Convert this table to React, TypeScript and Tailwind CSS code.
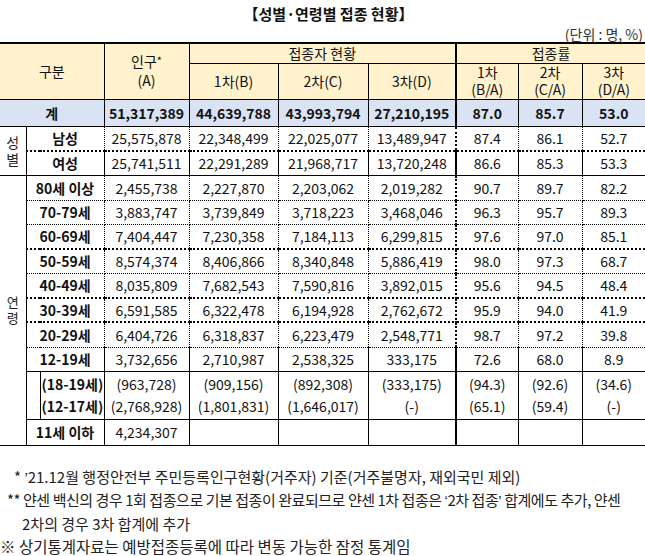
import React from "react";

type Row = {
  label: string;
  values: string[];
  sep: "dot" | "dot2" | "solid";
};

const genderRows: Row[] = [
  { label: "남성", values: ["25,575,878", "22,348,499", "22,025,077", "13,489,947", "87.4", "86.1", "52.7"], sep: "dot2" },
  { label: "여성", values: ["25,741,511", "22,291,289", "21,968,717", "13,720,248", "86.6", "85.3", "53.3"], sep: "solid" },
];

const ageRows: Row[] = [
  { label: "80세 이상", values: ["2,455,738", "2,227,870", "2,203,062", "2,019,282", "90.7", "89.7", "82.2"], sep: "dot" },
  { label: "70-79세", values: ["3,883,747", "3,739,849", "3,718,223", "3,468,046", "96.3", "95.7", "89.3"], sep: "dot" },
  { label: "60-69세", values: ["7,404,447", "7,230,358", "7,184,113", "6,299,815", "97.6", "97.0", "85.1"], sep: "dot2" },
  { label: "50-59세", values: ["8,574,374", "8,406,866", "8,340,848", "5,886,419", "98.0", "97.3", "68.7"], sep: "dot" },
  { label: "40-49세", values: ["8,035,809", "7,682,543", "7,590,816", "3,892,015", "95.6", "94.5", "48.4"], sep: "dot2" },
  { label: "30-39세", values: ["6,591,585", "6,322,478", "6,194,928", "2,762,672", "95.9", "94.0", "41.9"], sep: "dot2" },
  { label: "20-29세", values: ["6,404,726", "6,318,837", "6,223,479", "2,548,771", "98.7", "97.2", "39.8"], sep: "dot" },
  { label: "12-19세", values: ["3,732,656", "2,710,987", "2,538,325", "333,175", "72.6", "68.0", "8.9"], sep: "solid" },
];

const sub18 = ["(963,728)", "(909,156)", "(892,308)", "(333,175)", "(94.3)", "(92.6)", "(34.6)"];
const sub12 = ["(2,768,928)", "(1,801,831)", "(1,646,017)", "(-)", "(65.1)", "(59.4)", "(-)"];

const sepClass = {
  dot: "border-b border-dotted",
  dot2: "border-b-2 border-dotted",
  solid: "border-b border-solid",
};

// 세로 구분선: 3차(D) 뒤는 굵은 선, 마지막 열은 선 없음
function colBorder(i: number) {
  if (i === 3) return "border-r-2";
  if (i === 6) return "";
  return "border-r";
}

function DataRow({ row, height, first }: { row: Row; height: number; first?: React.ReactNode }) {
  const sep = sepClass[row.sep];
  return (
    <tr style={{ height }}>
      {first}
      <td colSpan={2} className={`${sep} border-r border-black text-center font-bold`}>
        {row.label}
      </td>
      {row.values.map((v, i) => (
        <td key={i} className={`${sep} ${colBorder(i)} border-black text-center`}>
          {v}
        </td>
      ))}
    </tr>
  );
}

// 따옴표는 라틴 글꼴로 (CJK 전각 방지)
function Q({ children }: { children: React.ReactNode }) {
  return <span className="font-['Liberation_Sans',sans-serif]">{children}</span>;
}

export default function App() {
  const heights = [25, 24, 25, 24, 25, 24, 25, 24, 25, 24];

  return (
    <div className="w-[645px] h-[556px] bg-white text-[#111] font-['Noto_Sans_CJK_KR','Malgun_Gothic',sans-serif] overflow-hidden">
      <div className="h-[26px] pt-[3px] pl-[12px] leading-[22px] text-center text-[15px] font-bold">
        【성별·연령별 접종 현황】
      </div>
      <div className="h-[16px] leading-[16px] text-right text-[14px] pr-[2px] text-[#333]">
        (단위 : 명, %)
      </div>

      <table className="table-fixed border-collapse w-[645px] text-[14px] leading-[18px]">
        <colgroup>
          <col className="w-[26px]" />
          <col className="w-[14px]" />
          <col className="w-[64px]" />
          <col className="w-[85px]" />
          <col className="w-[89px]" />
          <col className="w-[90px]" />
          <col className="w-[88px]" />
          <col className="w-[62px]" />
          <col className="w-[64px]" />
          <col className="w-[63px]" />
        </colgroup>
        <thead className="bg-[#fff2cc] font-normal">
          <tr className="h-[20px]">
            <th colSpan={3} rowSpan={2} className="border-t-2 border-b border-r border-black font-normal">
              구분
            </th>
            <th rowSpan={2} className="border-t-2 border-b border-r border-black font-normal">
              <div className="leading-[19px]">
                인구<sup className="text-[11px] relative -top-[2px]">*</sup>
              </div>
              <div className="leading-[19px]">(A)</div>
            </th>
            <th colSpan={3} className="border-t-2 border-b border-r-2 border-black font-normal">
              접종자 현황
            </th>
            <th colSpan={3} className="border-t-2 border-b border-black font-normal">
              접종률
            </th>
          </tr>
          <tr className="h-[36px]">
            <th className="border-b border-r border-black font-normal">1차(B)</th>
            <th className="border-b border-r border-black font-normal">2차(C)</th>
            <th className="border-b border-r-2 border-black font-normal">3차(D)</th>
            <th className="border-b border-r border-black font-normal leading-[17px]">
              1차
              <br />
              (B/A)
            </th>
            <th className="border-b border-r border-black font-normal leading-[17px]">
              2차
              <br />
              (C/A)
            </th>
            <th className="border-b border-black font-normal leading-[17px]">
              3차
              <br />
              (D/A)
            </th>
          </tr>
        </thead>
        <tbody>
          {/* 계 */}
          <tr className="h-[27px] bg-[#dae3f3] font-bold">
            <td colSpan={3} className="border-b border-r border-black text-center">
              계
            </td>
            {["51,317,389", "44,639,788", "43,993,794", "27,210,195", "87.0", "85.7", "53.0"].map((v, i) => (
              <td key={i} className={`border-b ${colBorder(i)} border-black text-center`}>
                {v}
              </td>
            ))}
          </tr>

          {/* 성별 */}
          {genderRows.map((row, idx) => (
            <DataRow
              key={row.label}
              row={row}
              height={idx === 0 ? 25 : 24}
              first={
                idx === 0 ? (
                  <td rowSpan={2} className="border-b border-r border-black text-center align-middle">
                    <div className="flex flex-col items-center leading-[17px] text-[#222]">
                      <span>성</span>
                      <span>별</span>
                    </div>
                  </td>
                ) : undefined
              }
            />
          ))}

          {/* 연령 */}
          {ageRows.map((row, idx) => (
            <DataRow
              key={row.label}
              row={row}
              height={heights[idx]}
              first={
                idx === 0 ? (
                  <td rowSpan={10} className="border-b border-r border-black text-center align-middle">
                    <div className="flex flex-col items-center text-[13px] leading-[16px] text-[#222]">
                      <span>연</span>
                      <span>령</span>
                    </div>
                  </td>
                ) : undefined
              }
            />
          ))}

          <tr className="h-[48px]">
            <td className="border-b border-r border-black" />
            <td className="border-b border-r border-black font-bold leading-[22px] pl-[1px] whitespace-nowrap">
              <div>(18-19세)</div>
              <div>(12-17세)</div>
            </td>
            {sub18.map((v, i) => (
              <td key={i} className={`border-b ${colBorder(i)} border-black text-center leading-[22px]`}>
                <div>{v}</div>
                <div>{sub12[i]}</div>
              </td>
            ))}
          </tr>

          <tr className="h-[26px]">
            <td colSpan={2} className="border-b border-r border-black text-center font-bold">
              11세 이하
            </td>
            <td className="border-b border-r border-black text-center">4,234,307</td>
            <td className="border-b border-r border-black" />
            <td className="border-b border-r border-black" />
            <td className="border-b border-r-2 border-black" />
            <td className="border-b border-r border-black" />
            <td className="border-b border-r border-black" />
            <td className="border-b border-black" />
          </tr>
        </tbody>
      </table>

      <div className="mt-[20px] text-[15px] leading-[22.5px] text-[#222] whitespace-nowrap">
        <div className="pl-[14px]">
          * <Q>’</Q>21.12월 행정안전부 주민등록인구현황(거주자) 기준(거주불명자, 재외국민 제외)
        </div>
        <div className="pl-[7px] tracking-[-0.45px]">
          ** 얀센 백신의 경우 1회 접종으로 기본 접종이 완료되므로 얀센 1차 접종은 <Q>‘</Q>2차 접종<Q>’</Q> 합계에도 추가, 얀센
        </div>
        <div className="pl-[22px]">2차의 경우 3차 합계에 추가</div>
        <div className="text-[15.5px]">※ 상기통계자료는 예방접종등록에 따라 변동 가능한 잠정 통계임</div>
      </div>
    </div>
  );
}
